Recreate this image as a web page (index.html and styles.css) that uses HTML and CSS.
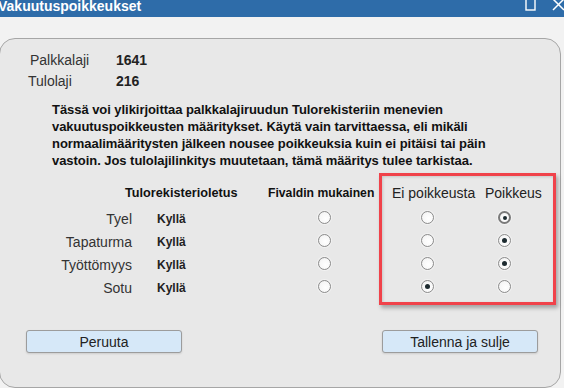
FILE: index.html
```html
<!DOCTYPE html>
<html lang="fi">
<head>
<meta charset="utf-8">
<title>Vakuutuspoikkeukset</title>
<link rel="stylesheet" href="styles.css">
</head>
<body>
<div class="titlebar">
  <span class="title">Vakuutuspoikkeukset</span>
  <span class="win-icons">
    <svg class="ic-max" width="12" height="12" viewBox="0 0 12 12"><rect x="1" y="-2" width="9" height="12" fill="none" stroke="#fff" stroke-width="1.4"/></svg>
    <svg class="ic-close" width="13" height="12" viewBox="0 0 13 12"><path d="M1 -1 L12 10 M12 -1 L1 10" stroke="#fff" stroke-width="1.5" fill="none"/></svg>
  </span>
</div>
<div class="panel">
  <div class="info-row"><span class="info-label">Palkkalaji</span><span class="info-value">1641</span></div>
  <div class="info-row"><span class="info-label">Tulolaji</span><span class="info-value">216</span></div>
  <p class="note">Tässä voi ylikirjoittaa palkkalajiruudun Tulorekisteriin menevien<br>vakuutuspoikkeusten määritykset. Käytä vain tarvittaessa, eli mikäli<br>normaalimääritysten jälkeen nousee poikkeuksia kuin ei pitäisi tai päin<br>vastoin. Jos tulolajilinkitys muutetaan, tämä määritys tulee tarkistaa.</p>
  <div class="grid">
    <div class="h h-default">Tulorekisterioletus</div>
    <div class="h h-fivaldi">Fivaldin mukainen</div>
    <div class="h h-ei">Ei poikkeusta</div>
    <div class="h h-poik">Poikkeus</div>

    <div class="lbl">Tyel</div><div class="val">Kyllä</div>
    <div class="rc c3"><span class="radio"></span></div>
    <div class="rc c4"><span class="radio"></span></div>
    <div class="rc c5"><span class="radio checked focus"></span></div>

    <div class="lbl">Tapaturma</div><div class="val">Kyllä</div>
    <div class="rc c3"><span class="radio"></span></div>
    <div class="rc c4"><span class="radio"></span></div>
    <div class="rc c5"><span class="radio checked"></span></div>

    <div class="lbl">Työttömyys</div><div class="val">Kyllä</div>
    <div class="rc c3"><span class="radio"></span></div>
    <div class="rc c4"><span class="radio"></span></div>
    <div class="rc c5"><span class="radio checked"></span></div>

    <div class="lbl">Sotu</div><div class="val">Kyllä</div>
    <div class="rc c3"><span class="radio"></span></div>
    <div class="rc c4"><span class="radio checked"></span></div>
    <div class="rc c5"><span class="radio"></span></div>
  </div>
  <div class="buttons">
    <button class="btn">Peruuta</button>
    <button class="btn">Tallenna ja sulje</button>
  </div>
  <div class="highlight"></div>
</div>
</body>
</html>
```
FILE: styles.css
```css
html, body {
  margin: 0;
  padding: 0;
}
body {
  background: #f2f2f2;
  font-family: "Liberation Sans", Arial, sans-serif;
  width: 564px;
  height: 388px;
  overflow: hidden;
  color: #333;
}
.titlebar {
  height: 17px;
  background: #2e6ca9;
  display: flex;
  align-items: flex-start;
  overflow: hidden;
}
.title {
  color: #fff;
  font-weight: bold;
  font-size: 14px;
  line-height: 14px;
  margin-left: -2px;
  margin-top: -1px;
}
.win-icons {
  margin-left: auto;
  display: flex;
  gap: 15px;
}
.ic-close { margin-right: -1px; }
.panel {
  position: relative;
  margin-top: 21px;
  margin-left: -1px;
  width: 562px;
  height: 350px;
  box-sizing: border-box;
  border: 1px solid #a6a6a6;
  border-radius: 16px;
  background: #e8e8e8;
  padding-top: 11px;
}
.info-row {
  display: flex;
  height: 21px;
  line-height: 21px;
  padding-left: 30px;
}
.info-label {
  width: 86px;
  font-size: 14px;
  color: #333;
}
.info-value {
  font-size: 14px;
  font-weight: bold;
  color: #222;
}
.info-row + .info-row .info-label { margin-left: -2px; width: 88px; }
.note {
  margin: 9px 0 0 52px;
  font-size: 13px;
  line-height: 17px;
  font-weight: bold;
  color: #111;
  letter-spacing: -0.05px;
}
.grid {
  display: grid;
  grid-template-columns: 140px 120px 125px 95px 76px;
  grid-template-rows: 25px repeat(4, 23px);
  margin-top: 14px;
}
.grid .h {
  line-height: 20px;
  height: 20px;
  white-space: nowrap;
}
.h-default {
  grid-column: 1 / 3;
  padding-left: 125px;
  font-size: 12.7px;
  font-weight: bold;
  color: #111;
}
.h-fivaldi {
  padding-left: 8px;
  font-size: 12.2px;
  font-weight: bold;
  color: #111;
}
.h-ei {
  padding-left: 7px;
  font-size: 14px;
  color: #222;
}
.h-poik {
  padding-left: 5px;
  font-size: 14px;
  color: #222;
}
.lbl {
  text-align: right;
  padding-right: 8px;
  font-size: 14px;
  line-height: 23px;
  color: #333;
}
.val {
  padding-left: 17px;
  font-size: 12px;
  font-weight: bold;
  line-height: 23px;
  color: #222;
}
.rc {
  display: flex;
  align-items: flex-start;
  padding-top: 3px;
}
.c3 { padding-left: 58px; }
.c4 { padding-left: 36px; }
.c5 { padding-left: 18px; }
.radio {
  width: 13px;
  height: 13px;
  box-sizing: border-box;
  border-radius: 50%;
  border: 1px solid #8c8c8c;
  background: radial-gradient(circle at 60% 60%, #ffffff 0%, #f7f7f7 60%, #e6e6e6 100%);
  box-shadow: 0 0 0 1px #f2f2f2;
  position: relative;
}
.radio.checked::after {
  content: "";
  position: absolute;
  left: 3px;
  top: 3px;
  width: 5px;
  height: 5px;
  border-radius: 50%;
  background: #1d2b30;
}
.radio.focus {
  border: 2px solid #7a7a7a;
}
.radio.focus::after {
  left: 2.5px;
  top: 2.5px;
  width: 4px;
  height: 4px;
}
.buttons {
  display: flex;
  justify-content: space-between;
  padding: 0 22px 0 26px;
  margin-top: 30px;
}
.btn {
  width: 156px;
  height: 23px;
  box-sizing: border-box;
  border: 1px solid #9c9c9c;
  border-radius: 3px;
  background: #d6e8f8;
  font-family: "Liberation Sans", Arial, sans-serif;
  font-size: 14px;
  color: #222;
  padding: 0;
  box-shadow: 0 1px 2px rgba(0,0,0,0.12);
}
.highlight {
  position: absolute;
  left: 379px;
  top: 134px;
  width: 177px;
  height: 132px;
  box-sizing: border-box;
  border: 3px solid #f0424a;
  box-shadow: 2px 3px 4px rgba(0,0,0,0.3), inset 1px 1px 3px rgba(0,0,0,0.15);
}
```
